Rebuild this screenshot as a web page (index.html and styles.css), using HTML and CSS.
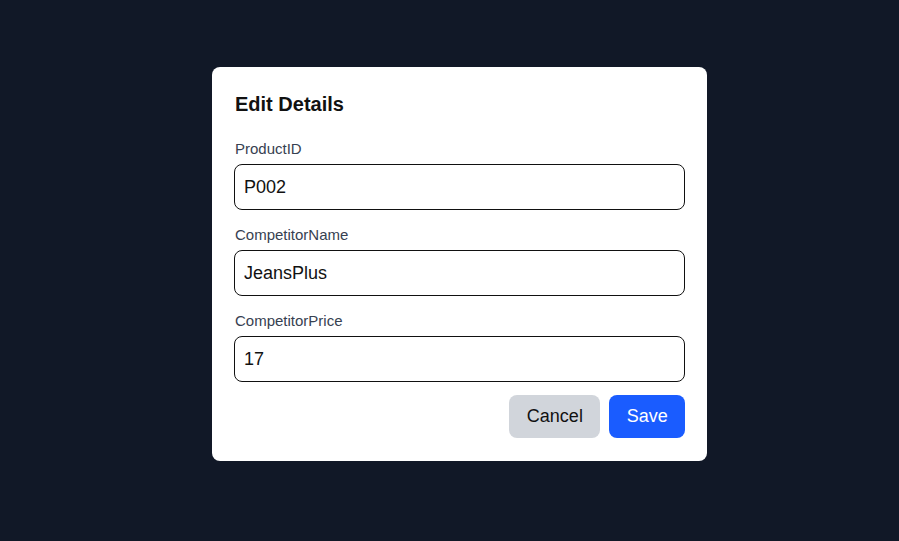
FILE: index.html
```html
<!DOCTYPE html>
<html>
<head>
<meta charset="utf-8">
<link rel="stylesheet" href="styles.css">
</head>
<body>
<div class="overlay">
  <div class="modal">
    <h2 class="title">Edit Details</h2>
    <div class="field">
      <label class="label">ProductID</label>
      <input class="input" type="text" value="P002">
    </div>
    <div class="field">
      <label class="label">CompetitorName</label>
      <input class="input" type="text" value="JeansPlus">
    </div>
    <div class="field">
      <label class="label">CompetitorPrice</label>
      <input class="input" type="text" value="17">
    </div>
    <div class="actions">
      <button class="btn btn-cancel">Cancel</button>
      <button class="btn btn-save">Save</button>
    </div>
  </div>
</div>
</body>
</html>
```
FILE: styles.css
```css
html, body {
  margin: 0;
  padding: 0;
  background: #111827;
  font-family: "Liberation Sans", Arial, sans-serif;
}
.overlay {
  width: 899px;
  height: 541px;
  box-sizing: border-box;
  display: flex;
  justify-content: center;
  align-items: flex-start;
  padding: 67px 0 0 20px;
}
.modal {
  width: 495px;
  box-sizing: border-box;
  background: #ffffff;
  border-radius: 8px;
  padding: 23px 22px 23px 22px;
}
.title {
  margin: 0 0 21px 1px;
  font-size: 20px;
  line-height: 28px;
  font-weight: 700;
  color: #111111;
}
.field {
  display: flex;
  flex-direction: column;
  margin-bottom: 15px;
}
.label {
  font-size: 15px;
  line-height: 20px;
  color: #374151;
  margin: 0 0 5px 1px;
}
.input {
  box-sizing: border-box;
  width: 100%;
  height: 46px;
  border: 1px solid #111111;
  border-radius: 8px;
  padding: 8px 9px;
  font-family: "Liberation Sans", Arial, sans-serif;
  font-size: 18px;
  line-height: 28px;
  color: #111111;
  background: #fff;
  outline: none;
}
.actions {
  display: flex;
  justify-content: flex-end;
  gap: 9px;
  margin-top: -2px;
}
.btn {
  border: none;
  border-radius: 8px;
  padding: 8px 17px;
  height: 43px;
  font-family: "Liberation Sans", Arial, sans-serif;
  font-size: 18px;
  line-height: 27px;
  cursor: pointer;
}
.btn-cancel {
  background: #d1d5db;
  color: #111111;
  padding: 8px 17.5px;
}
.btn-save {
  background: #1a5cff;
  color: #ffffff;
  padding: 8px 17.3px;
}
```
